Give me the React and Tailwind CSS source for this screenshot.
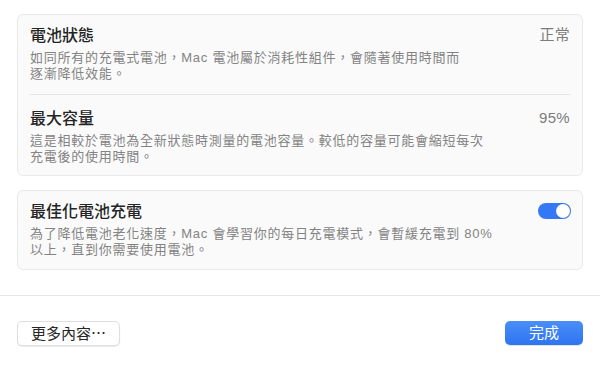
const font = {
  fontFamily: '"Liberation Sans", "Noto Sans CJK TC", sans-serif',
};

function Row({ title, lines, value, children, className = "" }) {
  return (
    <div className={`flex items-start justify-between ${className}`}>
      <div className="flex flex-col">
        <div className="text-[16px] leading-[22px] font-medium text-[#232323]">{title}</div>
        <div className="mt-[3px] text-[13px] leading-[16px] tracking-[0.75px] text-[#838383]">
          {lines.map((l, i) => (
            <div key={i} className="whitespace-nowrap">{l}</div>
          ))}
        </div>
      </div>
      {value && (
        <div className="text-[15px] leading-[20px] tracking-[0.3px] text-[#7c7c7c]">{value}</div>
      )}
      {children}
    </div>
  );
}

function Toggle() {
  return (
    <div className="mt-[2px] mr-[-1px] flex h-[16px] w-[33px] items-center justify-end rounded-full bg-[#3478f6] px-[1px]">
      <div className="h-[14px] w-[14px] rounded-full bg-white shadow-[0_0_1px_rgba(0,0,0,0.3)]" />
    </div>
  );
}

export default function App() {
  return (
    <div style={font} className="flex h-[368px] w-[600px] flex-col bg-white">
      <div className="flex h-[295px] flex-col gap-[14px] px-[17px] pt-[14px]">
        <div className="rounded-[6px] border border-[#e9e9e9] bg-[#fafafa] px-[12px]">
          <Row
            className="pt-[10px] pb-[12px]"
            title="電池狀態"
            value="正常"
            lines={[
              "如同所有的充電式電池，Mac 電池屬於消耗性組件，會隨著使用時間而",
              "逐漸降低效能。",
            ]}
          />
          <div className="h-px bg-[#e4e4e4]" />
          <Row
            className="pt-[13px] pb-[10px]"
            title="最大容量"
            value="95%"
            lines={[
              "這是相較於電池為全新狀態時測量的電池容量。較低的容量可能會縮短每次",
              "充電後的使用時間。",
            ]}
          />
        </div>
        <div className="rounded-[6px] border border-[#e9e9e9] bg-[#fafafa] px-[12px]">
          <Row
            className="pt-[10px] pb-[11px]"
            title="最佳化電池充電"
            lines={[
              "為了降低電池老化速度，Mac 會學習你的每日充電模式，會暫緩充電到 80%",
              "以上，直到你需要使用電池。",
            ]}
          >
            <Toggle />
          </Row>
        </div>
      </div>
      <div className="h-px bg-[#e6e6e6]" />
      <div className="flex items-start justify-between px-[17px] pt-[25px]">
        <button
          style={{ fontFamily: '"Noto Sans CJK TC", sans-serif' }}
          className="flex h-[25px] w-[103px] items-center justify-center rounded-[5px] border border-[#dedede] bg-white text-[15px] text-[#262626] shadow-[0_1px_1px_rgba(0,0,0,0.08)]"
        >
          更多內容⋯
        </button>
        <button className="flex h-[24px] w-[78px] items-center justify-center rounded-[5px] bg-gradient-to-b from-[#4a8ef8] to-[#2d74f0] text-[15px] text-white shadow-[0_1px_1px_rgba(0,0,0,0.12)]">
          完成
        </button>
      </div>
    </div>
  );
}
